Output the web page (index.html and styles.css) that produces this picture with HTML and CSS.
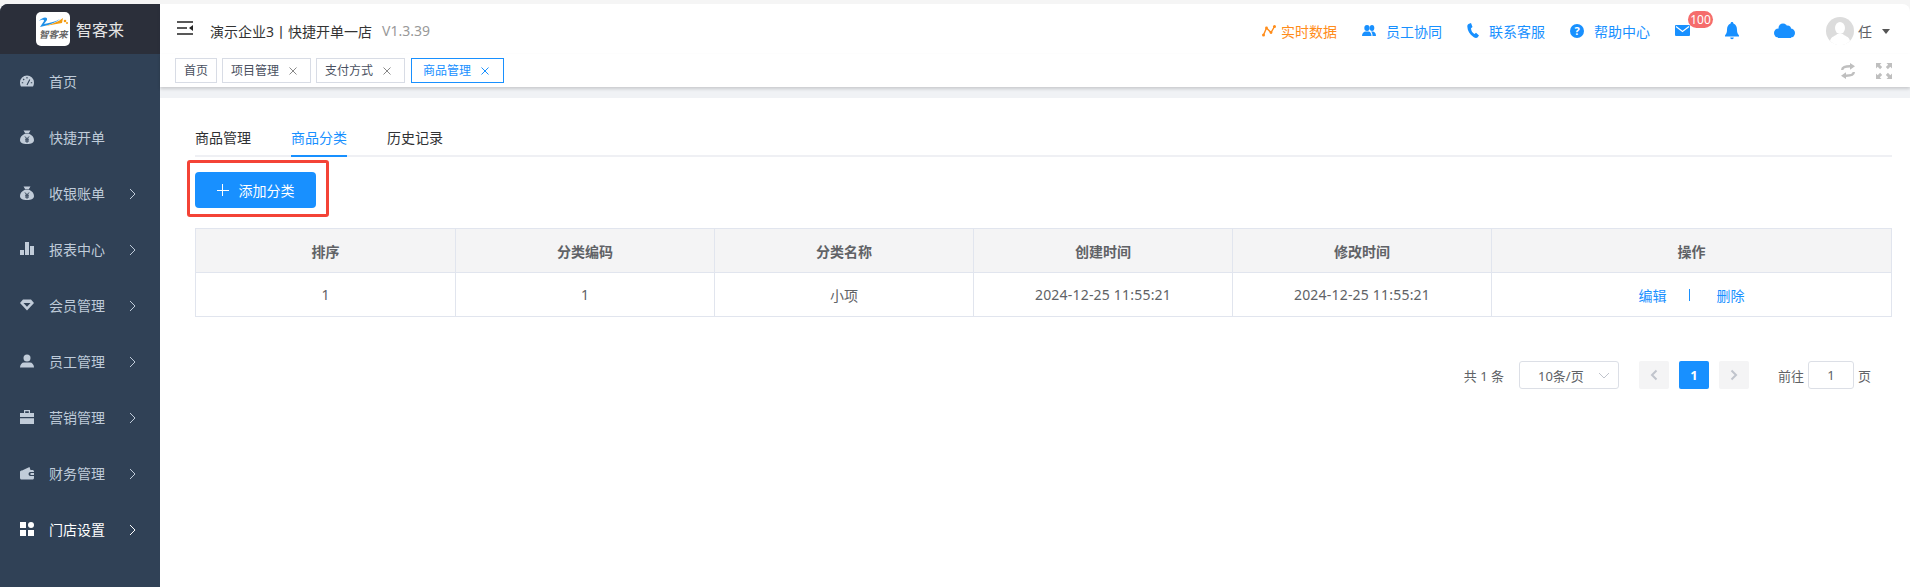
FILE: index.html
```html
<!DOCTYPE html>
<html>
<head>
    <title>商品管理</title>
    <link rel="stylesheet" href="styles.css">
</head>
<body>
<div class="app">
    <aside class="sidebar">
        <div class="brand">
            <div class="brand-logo">
                <svg class="swoosh" width="30" height="15" viewBox="0 0 30 15">
                    <path d="M1 5C4 1 10 0 9 4L6 8C11 7 17 6 22 3C17 7 11 9 2 11L6 5C6 3 3 4 1 5Z" fill="#1e90e8"/>
                    <path d="M7 10C14 8 20 6 25 2L24 7C18 8 13 9 7 10Z" fill="#f39c12"/>
                    <circle cx="27" cy="5" r="1.3" fill="#f39c12"/>
                    <circle cx="29" cy="7" r="1" fill="#f39c12"/>
                </svg>
                <span class="brand-mini">智客来</span>
            </div>
            <span class="brand-name">智客来</span>
        </div>
        <ul class="menu">
            <li class="menu-item">
                <svg class="menu-icon" viewBox="0 0 14 14"><path d="M7 1.500A7 7 0 0 0 0 8.500C0 10 .4 11.500 1 12.500H13C13.600 11.500 14 10 14 8.500A7 7 0 0 0 7 1.500Z" fill="#c1ccd9"/><path d="M7 3V4.500M3.200 5L4.200 6M1.800 8.800H3.200M10.800 8.800H12.200M7 11L9.800 5.500" stroke="#304156" stroke-width="1.100" fill="none"/></svg>
                <span>首页</span>
            </li>
            <li class="menu-item">
                <svg class="menu-icon" viewBox="0 0 14 14"><path d="M3.500 0.500H10.500L8.800 3.200H5.200ZM4.800 3.800H9.200C12 5 14 7.500 14 10C14 12.800 11.500 14 7 14C2.500 14 0 12.800 0 10C0 7.500 2 5 4.800 3.800Z" fill="#c1ccd9"/><path d="M5 6.500L7 8.800L9 6.500M5 9.200H9M5 11H9M7 8.800V12.800" stroke="#304156" fill="none" stroke-width="1"/></svg>
                <span>快捷开单</span>
            </li>
            <li class="menu-item">
                <svg class="menu-icon" viewBox="0 0 14 14"><path d="M3.500 0.500H10.500L8.800 3.200H5.200ZM4.800 3.800H9.200C12 5 14 7.500 14 10C14 12.800 11.500 14 7 14C2.500 14 0 12.800 0 10C0 7.500 2 5 4.800 3.800Z" fill="#c1ccd9"/><path d="M5 6.500L7 8.800L9 6.500M5 9.200H9M5 11H9M7 8.800V12.800" stroke="#304156" fill="none" stroke-width="1"/></svg>
                <span>收银账单</span>
                <svg class="chevron" viewBox="0 0 7 12"><path d="M1 1L6 6L1 11" fill="none" stroke="currentColor"/></svg>
            </li>
            <li class="menu-item">
                <svg class="menu-icon" viewBox="0 0 14 14"><path d="M0 8H4V13H0ZM5 0H9V13H5ZM10 4H14V13H10Z" fill="#c1ccd9"/></svg>
                <span>报表中心</span>
                <svg class="chevron" viewBox="0 0 7 12"><path d="M1 1L6 6L1 11" fill="none" stroke="currentColor"/></svg>
            </li>
            <li class="menu-item">
                <svg class="menu-icon" viewBox="0 0 14 14"><path d="M3 1.500H11L14 5L7 12.500L0 5ZM3.500 5L7 8.800L10.500 5Z" fill="#c1ccd9" fill-rule="evenodd"/></svg>
                <span>会员管理</span>
                <svg class="chevron" viewBox="0 0 7 12"><path d="M1 1L6 6L1 11" fill="none" stroke="currentColor"/></svg>
            </li>
            <li class="menu-item">
                <svg class="menu-icon" viewBox="0 0 14 14"><circle cx="7" cy="4" r="3.500" fill="#c1ccd9"/><path d="M0 13.500C0 10.500 2 8.500 4 8.500H10C12 8.500 14 10.500 14 13.500Z" fill="#c1ccd9"/></svg>
                <span>员工管理</span>
                <svg class="chevron" viewBox="0 0 7 12"><path d="M1 1L6 6L1 11" fill="none" stroke="currentColor"/></svg>
            </li>
            <li class="menu-item">
                <svg class="menu-icon" viewBox="0 0 14 14"><path d="M4 0H10V3H14V7H0V3H4ZM5.200 1.200V3H8.800V1.200ZM0 8.200H14V14H0Z" fill="#c1ccd9" fill-rule="evenodd"/></svg>
                <span>营销管理</span>
                <svg class="chevron" viewBox="0 0 7 12"><path d="M1 1L6 6L1 11" fill="none" stroke="currentColor"/></svg>
            </li>
            <li class="menu-item">
                <svg class="menu-icon" viewBox="0 0 14 14"><path d="M2 4.500L9.500 1L10.500 4H12.500C13.300 4 14 4.700 14 5.500V6H10.500A2 2 0 0 0 10.500 10H14V12C14 12.800 13.300 13.500 12.500 13.500H1.500C.7 13.500 0 12.800 0 12V6C0 5 .8 4.500 2 4.500ZM10.500 7H14V9H10.500Z" fill="#c1ccd9"/></svg>
                <span>财务管理</span>
                <svg class="chevron" viewBox="0 0 7 12"><path d="M1 1L6 6L1 11" fill="none" stroke="currentColor"/></svg>
            </li>
            <li class="menu-item active">
                <svg class="menu-icon" viewBox="0 0 14 14"><path d="M0 0H6V6H0ZM8 8H14V14H8ZM0 8H6V14H0Z" fill="#fff"/><circle cx="11" cy="3" r="3" fill="#fff"/></svg>
                <span>门店设置</span>
                <svg class="chevron" viewBox="0 0 7 12"><path d="M1 1L6 6L1 11" fill="none" stroke="currentColor"/></svg>
            </li>
        </ul>
    </aside>

    <main class="main">
        <header class="topbar">
            <svg class="fold" width="16" height="14" viewBox="0 0 16 14"><path d="M0 1H16M0 7H10M0 13H16" stroke="#222" stroke-width="1.600"/><path d="M16 4V10L12 7Z" fill="#222"/></svg>
            <span class="shop">演示企业3丨快捷开单一店</span>
            <span class="version">V1.3.39</span>
            <div class="top-links">
                <a class="top-link orange">
                    <svg width="14" height="12" viewBox="0 0 14 12"><path d="M1.500 10L4.500 3L9 7.500L12.500 1.500" fill="none" stroke="#ff8c1a" stroke-width="1.400"/><circle cx="1.500" cy="10" r="1.500" fill="#ff8c1a"/><circle cx="4.500" cy="3" r="1.400" fill="#ff8c1a"/><circle cx="9" cy="7.500" r="1.400" fill="#ff8c1a"/><circle cx="12.500" cy="1.500" r="1.500" fill="#ff8c1a"/></svg>
                    实时数据
                </a>
                <a class="top-link">
                    <svg width="14" height="11" viewBox="0 0 14 11"><ellipse cx="5" cy="3" rx="2.700" ry="3" fill="#1890ff"/><ellipse cx="10" cy="3" rx="2.300" ry="3" fill="#1890ff"/><path d="M0 11C0 8 2 6.500 3.500 6.500H6.500C8 6.500 9.500 8 9.500 11ZM10.500 11C10.500 9 10 7.500 9 6.500H10.500C12.500 6.500 14 8 14 11Z" fill="#1890ff"/></svg>
                    员工协同
                </a>
                <a class="top-link">
                    <svg width="12" height="15" viewBox="0 0 12 15"><path d="M1.500 1L4 0L5.500 4L4 5.200C4 7.500 5.500 10 7.500 11L9 9.800L12 12.500L10.500 14.500C9.500 15.200 8 15 6.500 14C2.500 11.500 .5 7.500 .3 3.500C.3 2.500 .7 1.500 1.500 1Z" fill="#1890ff"/></svg>
                    联系客服
                </a>
                <a class="top-link">
                    <svg width="14" height="14" viewBox="0 0 14 14"><circle cx="7" cy="7" r="7" fill="#1890ff"/><text x="7" y="11" class="help-mark">?</text></svg>
                    帮助中心
                </a>
            </div>
            <div class="mail">
                <svg width="15" height="11" viewBox="0 0 15 11"><rect width="15" height="11" rx="1" fill="#1890ff"/><path d="M1 1.500L7.500 6.500L14 1.500" fill="none" stroke="#fff" stroke-width="1.200"/></svg>
                <span class="badge">100</span>
            </div>
            <svg class="bell" width="14" height="18" viewBox="0 0 14 18"><path d="M7 0C8 0 8.400 .7 8.400 1.500C11 2.300 12 5 12 8C12 10.500 12.800 12 14 13.500V14.500H0V13.500C1.200 12 2 10.500 2 8C2 5 3 2.300 5.600 1.500C5.600 .7 6 0 7 0Z" fill="#1890ff"/><path d="M5.200 15.500H8.800A1.800 1.800 0 0 1 5.200 15.500Z" fill="#1890ff"/></svg>
            <svg class="cloud" width="21" height="15" viewBox="0 0 21 15"><circle cx="4.500" cy="10" r="4.500" fill="#1890ff"/><circle cx="9" cy="5" r="4.500" fill="#1890ff"/><circle cx="13.500" cy="6" r="3.500" fill="#1890ff"/><circle cx="16.500" cy="10" r="4.500" fill="#1890ff"/><rect x="4" y="8" width="13" height="7" fill="#1890ff"/></svg>
            <div class="avatar">
                <svg width="28" height="28" viewBox="0 0 28 28"><circle cx="14" cy="14" r="14" fill="#dcdcdc"/><ellipse cx="14" cy="11" rx="5" ry="6" fill="#fff"/><path d="M4 24C5 19 10 19 11 17H17C18 19 23 19 24 24A14 14 0 0 1 4 24Z" fill="#fff"/></svg>
            </div>
            <span class="user">任</span>
            <span class="caret"></span>
        </header>

        <nav class="tagsbar">
            <span class="tag">首页</span>
            <span class="tag closable">项目管理<svg class="close" width="8" height="8" viewBox="0 0 8 8"><path d="M.5 .5L7.500 7.500M7.500 .5L.5 7.500" stroke="currentColor"/></svg></span>
            <span class="tag closable">支付方式<svg class="close" width="8" height="8" viewBox="0 0 8 8"><path d="M.5 .5L7.500 7.500M7.500 .5L.5 7.500" stroke="currentColor"/></svg></span>
            <span class="tag closable current">商品管理<svg class="close" width="8" height="8" viewBox="0 0 8 8"><path d="M.5 .5L7.500 7.500M7.500 .5L.5 7.500" stroke="currentColor"/></svg></span>
            <div class="tag-tools">
                <svg width="14" height="16" viewBox="0 0 14 16"><path d="M1.200 7C1.200 4.500 4 3.300 9 3.300M12.800 9C12.800 11.500 10 12.700 5 12.700" fill="none" stroke="#bfbfbf" stroke-width="2.400"/><path d="M9 0L14 3.300L9 6.800ZM5 16L0 12.700L5 9.200Z" fill="#bfbfbf"/></svg>
                <svg width="16" height="16" viewBox="0 0 16 16"><path d="M0 0H5.500L3.800 1.700L6.200 4.100L4.100 6.200L1.700 3.800L0 5.500ZM16 0V5.500L14.300 3.800L11.900 6.200L9.800 4.100L12.200 1.700L10.500 0ZM0 16V10.500L1.700 12.200L4.100 9.800L6.200 11.900L3.800 14.300L5.500 16ZM16 16H10.500L12.200 14.300L9.800 11.900L11.900 9.800L14.300 12.200L16 10.500Z" fill="#bfbfbf"/></svg>
            </div>
        </nav>

        <div class="band"></div>

        <section class="content">
            <div class="tabs">
                <a class="tab">商品管理</a>
                <a class="tab on">商品分类</a>
                <a class="tab">历史记录</a>
            </div>

            <div class="toolbar">
                <button class="add-btn" type="button"><span class="plus"></span>添加分类</button>
            </div>

            <table class="grid">
                <thead>
                    <tr>
                        <th>排序</th>
                        <th>分类编码</th>
                        <th>分类名称</th>
                        <th>创建时间</th>
                        <th>修改时间</th>
                        <th class="ops-col">操作</th>
                    </tr>
                </thead>
                <tbody>
                    <tr>
                        <td>1</td>
                        <td>1</td>
                        <td>小项</td>
                        <td class="date">2024-12-25 11:55:21</td>
                        <td class="date">2024-12-25 11:55:21</td>
                        <td class="ops"><a>编辑</a><span class="sep"></span><a>删除</a></td>
                    </tr>
                </tbody>
            </table>

            <div class="pager">
                <span class="total">共 1 条</span>
                <div class="size">10条/页<svg width="12" height="7" viewBox="0 0 12 7"><path d="M1 1L6 6L11 1" fill="none" stroke="#c0c4cc"/></svg></div>
                <span class="page-btn"><svg width="8" height="12" viewBox="0 0 8 12"><path d="M6.500 1.500L2 6L6.500 10.500" fill="none" stroke="#c0c4cc" stroke-width="2"/></svg></span>
                <span class="page-btn now">1</span>
                <span class="page-btn"><svg width="8" height="12" viewBox="0 0 8 12"><path d="M1.500 1.500L6 6L1.500 10.500" fill="none" stroke="#c0c4cc" stroke-width="2"/></svg></span>
                <span class="goto">前往</span>
                <span class="page-input">1</span>
                <span class="page-unit">页</span>
            </div>
        </section>
    </main>
</div>

<div class="mark"></div>
</body>
</html>
```

FILE: styles.css
```css
* {
    box-sizing: border-box;
}

html, body {
    height: 100%;
}

body {
    margin: 0;
    background-color: #f5f5f5;
    font-family: "Noto Sans", "Noto Sans CJK SC", sans-serif;
    font-size: 14px;
    color: #606266;
    overflow: hidden;
    position: relative;
}

.app {
    display: flex;
    height: 583px;
    margin-top: 4px;
    background-color: #fff;
    border-radius: 8px 8px 0 0;
    overflow: hidden;
}

/* sidebar */
.sidebar {
    width: 160px;
    flex: none;
    background-color: #304156;
    color: #bfcbd9;
}

.brand {
    height: 50px;
    background-color: #2b2f3a;
    display: flex;
    align-items: center;
    padding-left: 36px;
}

.brand-logo {
    width: 34px;
    height: 34px;
    background-color: #fff;
    border-radius: 5px;
    position: relative;
    overflow: hidden;
}

.swoosh {
    position: absolute;
    left: 2px;
    top: 4px;
}

.brand-mini {
    position: absolute;
    left: 3px;
    top: 17px;
    font-size: 9.5px;
    line-height: 12px;
    font-weight: bold;
    font-style: italic;
    color: #666;
    white-space: nowrap;
}

.brand-name {
    margin-left: 6px;
    font-size: 16px;
    color: #e4e4e4;
}

.menu {
    list-style: none;
    margin: 0;
    padding: 0;
}

.menu-item {
    height: 56px;
    display: flex;
    align-items: center;
    padding: 0 0 2px 20px;
    position: relative;
}

.menu-item.active {
    color: #fff;
}

.menu-icon {
    width: 14px;
    height: 14px;
    margin-right: 15px;
    flex: none;
}

.chevron {
    position: absolute;
    left: 129px;
    top: 22px;
    width: 7px;
    height: 12px;
}

/* header */
.main {
    flex: 1;
    min-width: 0;
}

.topbar {
    height: 50px;
    display: flex;
    align-items: center;
    padding: 3px 20px 0 17px;
    background-color: #fff;
    box-shadow: 0 1px 4px rgba(0, 21, 41, 0.08);
    position: relative;
}

.fold {
    margin-right: 17px;
    margin-top: -6px;
}

.shop {
    font-size: 14px;
    color: #333;
}

.version {
    margin-left: 10px;
    color: #999;
}

.top-links {
    display: flex;
    margin-left: auto;
    gap: 25px;
}

.top-link {
    display: flex;
    align-items: center;
    gap: 10px;
    color: #1890ff;
}

.top-link.orange {
    color: #ff8c1a;
    gap: 5px;
}

.help-mark {
    font-size: 11px;
    font-weight: bold;
    fill: #fff;
    text-anchor: middle;
}

.mail {
    margin-left: 25px;
    position: relative;
    display: flex;
}

.badge {
    position: absolute;
    left: 13px;
    top: -14px;
    width: 25px;
    height: 17px;
    line-height: 17px;
    text-align: center;
    border-radius: 9px;
    background-color: #f56c6c;
    color: #fff;
    font-size: 12px;
}

.bell {
    margin-left: 35px;
}

.cloud {
    margin-left: 35px;
}

.avatar {
    margin-left: 31px;
    width: 28px;
    height: 28px;
    display: flex;
}

.user {
    margin-left: 4px;
    color: #606266;
}

.caret {
    margin-left: 10px;
    width: 0;
    height: 0;
    border: 4px solid transparent;
    border-top: 5px solid #555;
    margin-top: 5px;
}

/* open pages */
.tagsbar {
    height: 33px;
    display: flex;
    align-items: flex-start;
    gap: 5px;
    padding: 4px 0 0 15px;
    background-color: #fff;
    box-shadow: 0 2px 3px rgba(0, 0, 0, 0.16);
    position: relative;
}

.tag {
    height: 25px;
    line-height: 23px;
    padding: 0 8px;
    border: 1px solid #d8dce5;
    font-size: 12px;
    color: #495060;
    display: flex;
    align-items: center;
}

.tag.closable {
    padding-right: 13px;
}

.tag.current {
    margin-left: 1px;
    border-color: #1890ff;
    color: #1890ff;
    padding: 0 14px 0 11px;
}

.close {
    margin-left: 10px;
    color: #888;
}

.tag.current .close {
    color: #1890ff;
}

.tag-tools {
    margin-left: auto;
    display: flex;
    align-items: center;
    gap: 21px;
    padding: 5px 18px 0 0;
}

.band {
    height: 11px;
    background-color: #f0f2f5;
}

/* page */
.content {
    padding: 26px 18px 0 35px;
    background-color: #fff;
    height: 489px;
}

.tabs {
    display: flex;
    gap: 40px;
    border-bottom: 2px solid #eff0f4;
    height: 33px;
}

.tab {
    height: 33px;
    line-height: 28px;
    color: #303133;
}

.tab.on {
    color: #1890ff;
    border-bottom: 2px solid #1890ff;
}

.toolbar {
    margin-top: 15px;
}

.add-btn {
    width: 121px;
    height: 36px;
    border: none;
    border-radius: 4px;
    background-color: #1890ff;
    color: #fff;
    font-family: inherit;
    font-size: 14px;
    display: flex;
    align-items: center;
    justify-content: center;
}

.plus {
    width: 12px;
    height: 12px;
    margin-right: 10px;
    background:
        linear-gradient(#fff, #fff) center / 12px 1px no-repeat,
        linear-gradient(#fff, #fff) center / 1px 12px no-repeat;
}

.grid {
    width: 1697px;
    margin-top: 20px;
    border-collapse: collapse;
    table-layout: fixed;
}

.grid th, .grid td {
    height: 44px;
    padding: 0;
    border: 1px solid #e1e5ee;
    text-align: center;
    font-weight: normal;
    color: #606266;
}

.grid th {
    background-color: #f4f4f5;
    font-weight: bold;
}

.grid th:not(.ops-col) {
    width: 259px;
}

.grid th:first-child {
    width: 260px;
}

.grid .date {
    letter-spacing: 0.2px;
}

.ops a {
    color: #1890ff;
}

.sep {
    display: inline-block;
    width: 1px;
    height: 12px;
    margin: 0 27px 0 22px;
    background-color: #1890ff;
}

.pager {
    display: flex;
    align-items: center;
    height: 28px;
    margin-top: 44px;
    padding-right: 21px;
    justify-content: flex-end;
    font-size: 13px;
}

.size {
    width: 100px;
    height: 28px;
    margin-left: 15px;
    border: 1px solid #dcdfe6;
    border-radius: 3px;
    display: flex;
    align-items: center;
    justify-content: space-between;
    padding: 0 8px 0 18px;
}

.page-btn {
    width: 30px;
    height: 28px;
    margin-left: 10px;
    border-radius: 2px;
    background-color: #f4f4f5;
    display: flex;
    align-items: center;
    justify-content: center;
}

.size + .page-btn {
    margin-left: 20px;
}

.page-btn.now {
    background-color: #1890ff;
    color: #fff;
    font-weight: bold;
}

.goto {
    margin-left: 29px;
}

.page-input {
    width: 46px;
    height: 28px;
    margin-left: 4px;
    border: 1px solid #dcdfe6;
    border-radius: 3px;
    line-height: 26px;
    text-align: center;
}

.page-unit {
    margin-left: 4px;
}

/* red box marked on the screenshot */
.mark {
    position: absolute;
    left: 187px;
    top: 160px;
    width: 142px;
    height: 57px;
    border: 3px solid #f44336;
    border-radius: 3px;
}
```
